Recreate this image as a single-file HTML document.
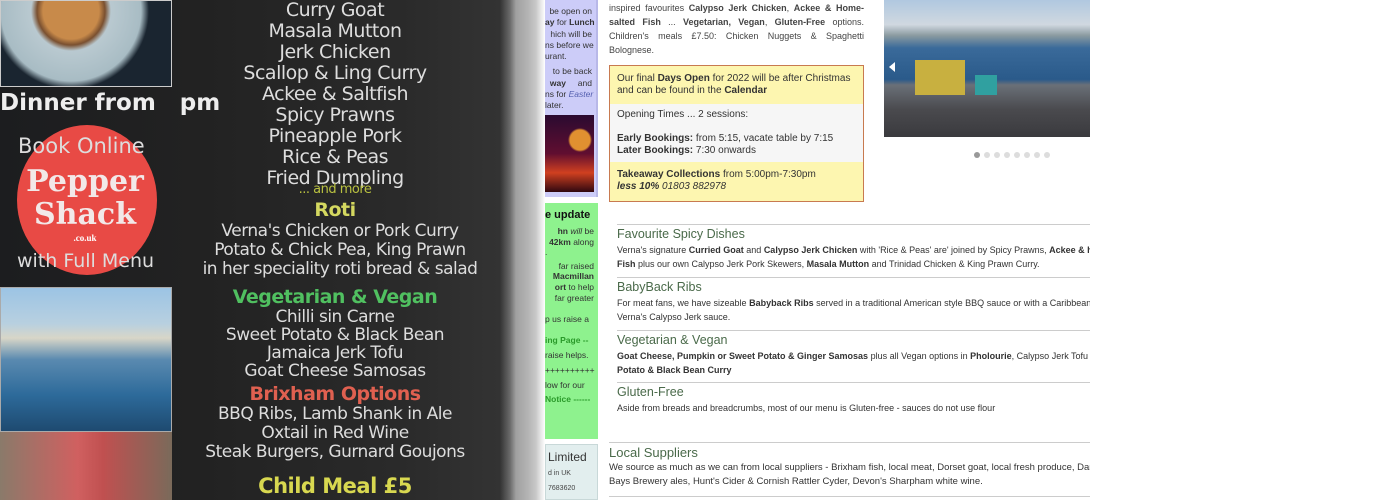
<!DOCTYPE html>
<html><head><meta charset="utf-8"><style>
*{margin:0;padding:0;box-sizing:border-box}
body{width:1400px;height:500px;overflow:hidden;background:#fff;font-family:"Liberation Sans",sans-serif;position:relative}
.a{position:absolute}
.photo{left:0;top:0;width:545px;height:500px;background:linear-gradient(90deg,#1c1d1f 0px,#222 200px,#2a2a2a 400px,#333 500px,#6a6a6a 510px,#a0a0a0 516px,#b4b4b4 528px,#c8c8c8 536px,#e8e8e8 541px,#fff 545px);overflow:hidden}
.m{position:absolute;left:190px;width:290px;text-align:center;color:#ddd;font-family:"DejaVu Sans",sans-serif;font-size:19px;line-height:21px;letter-spacing:-0.5px}
.sb{font-size:8.5px;color:#333;line-height:11.3px;text-align:right;white-space:nowrap}
.sec{position:absolute;left:617px;width:473px;overflow:hidden;border-top:1px solid #ccc;font-size:9px;color:#333;line-height:14px;white-space:nowrap}
.sec h3{font-weight:normal;font-size:12.5px;color:#4a6a4a;line-height:16px;margin-top:1px}
</style></head><body>
<div class="a photo">
 <div class="a" style="left:0;top:0;width:172px;height:87px;background:radial-gradient(circle at 70px 10px,#c88a4a 0 28px,#7a5030 34px,#b9c9d0 40px,#a8bcc4 70px,#1a2530 78px);border:1px solid #ccc"></div>
 <div class="a" style="left:0;top:90px;color:#eee;font:bold 23px 'DejaVu Sans',sans-serif">Dinner from &nbsp; pm</div>
 <div class="a" style="left:17px;top:125px;width:140px;height:150px;border-radius:50%;background:#e84a45"></div>
 <div class="a" style="left:18px;top:134px;color:#ddd;font:21px 'DejaVu Sans',sans-serif">Book Online</div>
 <div class="a" style="left:20px;top:165px;width:130px;text-align:center;color:#f2e8e8;font:bold 30px/33px 'DejaVu Serif',serif">Pepper<br>Shack</div>
 <div class="a" style="left:20px;top:233px;width:130px;text-align:center;color:#fff;font:bold 9px serif">.co.uk</div>
 <div class="a" style="left:17px;top:250px;color:#ddd;font:19px 'DejaVu Sans',sans-serif">with Full Menu</div>
 <div class="a" style="left:0;top:287px;width:172px;height:145px;background:linear-gradient(180deg,#9cc4e4 0%,#b8d0e0 25%,#d8d6c8 35%,#5a8ab0 50%,#2d6a9a 75%,#1e4a70 100%);border:1px solid #aaa"></div>
 <div class="a" style="left:0;top:432px;width:172px;height:68px;background:linear-gradient(90deg,#8a7a6a,#d06060 45%,#c05050 60%,#7a6a5a)"></div>
 <div class="m" style="top:0">Curry Goat<br>Masala Mutton<br>Jerk Chicken<br>Scallop &amp; Ling Curry<br>Ackee &amp; Saltfish<br>Spicy Prawns<br>Pineapple Pork<br>Rice &amp; Peas<br>Fried Dumpling</div>
 <div class="m" style="top:179px;font-size:13px;color:#b8c040">... and more</div>
 <div class="m" style="top:200px;font-weight:bold;color:#d4d860">Roti</div>
 <div class="m" style="top:222px;left:200px;width:280px;line-height:19px;font-size:17px">Verna's Chicken or Pork Curry<br>Potato &amp; Chick Pea, King Prawn<br>in her speciality roti bread &amp; salad</div>
 <div class="m" style="top:287px;font-weight:bold;color:#50c060">Vegetarian &amp; Vegan</div>
 <div class="m" style="top:308px;line-height:18px;font-size:17px">Chilli sin Carne<br>Sweet Potato &amp; Black Bean<br>Jamaica Jerk Tofu<br>Goat Cheese Samosas</div>
 <div class="m" style="top:384px;font-weight:bold;color:#e06050">Brixham Options</div>
 <div class="m" style="top:405px;line-height:19px;font-size:17px">BBQ Ribs, Lamb Shank in Ale<br>Oxtail in Red Wine<br>Steak Burgers, Gurnard Goujons</div>
 <div class="m" style="top:476px;font-weight:bold;color:#d8d850;font-size:21px">Child Meal £5</div>
</div>
<!-- sidebar -->
<div class="a" style="left:545px;top:0;width:53px;height:197px;background:#ccccf8;border-right:2px solid #b8b8e8;overflow:hidden">
 <div class="sb" style="padding:6px 4px 0 0;width:51px;overflow:hidden">be open on<br><b>ay</b> for <b>Lunch</b><br>hich will be<br>ns before we<br><span style="float:left">urant.</span><br><div style="height:4px"></div>to be back<br><b>way</b> &nbsp; &nbsp; and<br>ns for <i style="color:#5560b0">Easter</i><br><span style="float:left">later.</span><br></div>
 <div class="a" style="left:0;top:115px;width:49px;height:77px;background:radial-gradient(circle at 35px 25px,#e09030 0 10px,transparent 12px),linear-gradient(180deg,#2a0a30,#600e30 50%,#d04020 75%,#300810)"></div>
</div>
<div class="a" style="left:545px;top:203px;width:53px;height:236px;background:#8ef28e;overflow:hidden;font-size:8.5px;color:#333;text-align:right;padding-right:4px;line-height:10.3px;white-space:nowrap">
 <div style="font:bold 11px 'Liberation Sans';color:#111;text-align:left;margin-top:6px">e update</div>
 <div style="margin-top:5px;line-height:10.6px;text-align:right"><b>hn</b> <i>will</i> be<br><b>42km</b> along<br><span style="float:left">.</span><br><div style="height:3px"></div>far raised<br><b>Macmillan</b><br><b>ort</b> to help<br>far greater<br><br><span style="float:left">p us raise a</span><br><br><b style="color:#2a9a2a;float:left">ing Page --</b><br><div style="height:4px"></div><span style="float:left">raise helps.</span><br><div style="height:5px"></div><span style="float:left">++++++++++</span><br><div style="height:4px"></div><span style="float:left">low for our</span><br><div style="height:4px"></div><b style="color:#2a9a2a;float:left">Notice ------</b></div>
</div>
<div class="a" style="left:545px;top:444px;width:53px;height:56px;background:#e2eeee;border:1px solid #c8d8d8;font-size:7px;color:#444;padding-left:2px">
 <div style="font-size:12px;color:#333;margin-top:5px">Limited</div>
 <div style="margin-top:6px">d in UK</div><div style="margin-top:8px">7683620</div>
</div>
<!-- main -->
<div class="a" style="left:609px;top:1px;width:255px;font-size:9px;line-height:14px;color:#444;text-align:justify">inspired favourites <b>Calypso Jerk Chicken</b>, <b>Ackee &amp; Home-salted Fish</b> ... <b>Vegetarian, Vegan</b>, <b>Gluten-Free</b> options. Children's meals £7.50: Chicken Nuggets &amp; Spaghetti Bolognese.</div>
<div class="a" style="left:609px;top:65px;width:255px;height:137px;border:1px solid #c87a50;background:#fdf6b0;font-size:10px;line-height:12px;color:#333">
 <div style="padding:7px 7px">Our final <b>Days Open</b> for 2022 will be after Christmas and can be found in the <b>Calendar</b></div>
 <div style="background:#f6f6f6;height:58px;padding:5px 7px">Opening Times ... 2 sessions:<div style="height:12px"></div><b>Early Bookings:</b> from 5:15, vacate table by 7:15<br><b>Later Bookings:</b> 7:30 onwards</div>
 <div style="padding:7px 7px"><b>Takeaway Collections</b> from 5:00pm-7:30pm<br><i><b>less 10%</b> 01803 882978</i></div>
</div>
<div class="sec" style="top:224px"><h3>Favourite Spicy Dishes</h3><div style="margin-top:1px">Verna's signature <b>Curried Goat</b> and <b>Calypso Jerk Chicken</b> with 'Rice &amp; Peas' are' joined by Spicy Prawns, <b>Ackee &amp; home-salted</b><br><b>Fish</b> plus our own Calypso Jerk Pork Skewers, <b>Masala Mutton</b> and Trinidad Chicken &amp; King Prawn Curry.</div></div>
<div class="sec" style="top:277px"><h3>BabyBack Ribs</h3><div style="margin-top:1px">For meat fans, we have sizeable <b>Babyback Ribs</b> served in a traditional American style BBQ sauce or with a Caribbean twist in<br>Verna's Calypso Jerk sauce.</div></div>
<div class="sec" style="top:330px"><h3>Vegetarian &amp; Vegan</h3><div style="margin-top:1px"><b>Goat Cheese, Pumpkin or Sweet Potato &amp; Ginger Samosas</b> plus all Vegan options in <b>Pholourie</b>, Calypso Jerk Tofu &amp; <b>Sweet</b><br><b>Potato &amp; Black Bean Curry</b></div></div>
<div class="sec" style="top:382px"><h3>Gluten-Free</h3><div style="margin-top:1px">Aside from breads and breadcrumbs, most of our menu is Gluten-free - sauces do not use flour</div></div>
<div class="sec" style="left:609px;width:481px;top:442px;font-size:9.5px"><h3 style="font-size:13px;line-height:17px">Local Suppliers</h3><div>We source as much as we can from local suppliers - Brixham fish, local meat, Dorset goat, local fresh produce, Dartmoor ales,<br>Bays Brewery ales, Hunt's Cider &amp; Cornish Rattler Cyder, Devon's Sharpham white wine.</div></div>
<div class="a" style="left:609px;top:496px;width:481px;border-top:1px solid #ccc"></div>
<!-- slideshow -->
<div class="a" style="left:884px;top:0;width:206px;height:137px;background:linear-gradient(180deg,#b0c8e0 0%,#d0d8e0 18%,#8a9aa0 26%,#3a6a9a 35%,#2a5a8a 58%,#6a7078 62%,#4a4a4e 80%,#3a3a3e 100%)"></div>
<div class="a" style="left:915px;top:60px;width:50px;height:35px;background:#c8b040"></div>
<div class="a" style="left:975px;top:75px;width:22px;height:20px;background:#30a0a0"></div>
<div class="a" style="left:889px;top:62px;width:0;height:0;border:5px solid transparent;border-right:6px solid #fff;border-left:0"></div>
<div class="a" style="left:974px;top:152px;display:flex;gap:4px">
 <span style="width:6px;height:6px;border-radius:50%;background:#999"></span><span style="width:6px;height:6px;border-radius:50%;background:#ddd"></span><span style="width:6px;height:6px;border-radius:50%;background:#ddd"></span><span style="width:6px;height:6px;border-radius:50%;background:#ddd"></span><span style="width:6px;height:6px;border-radius:50%;background:#ddd"></span><span style="width:6px;height:6px;border-radius:50%;background:#ddd"></span><span style="width:6px;height:6px;border-radius:50%;background:#ddd"></span><span style="width:6px;height:6px;border-radius:50%;background:#ddd"></span>
</div>
</body></html>
